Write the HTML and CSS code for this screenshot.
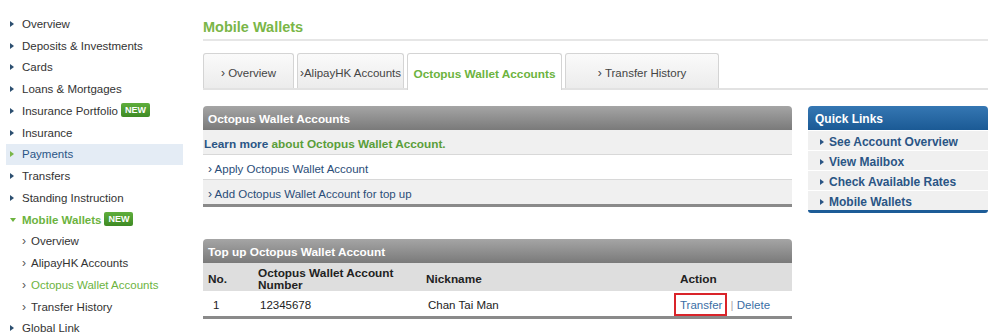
FILE: index.html
```html
<!DOCTYPE html>
<html lang="en">
<head>
    <meta charset="UTF-8">
    <title>Mobile Wallets</title>
    <link rel="stylesheet" href="styles.css">
</head>
<body>
    <div class="page">
        <ul class="sidebar">
            <li class="nav"><span class="tri"></span>Overview</li>
            <li class="nav"><span class="tri"></span>Deposits &amp; Investments</li>
            <li class="nav"><span class="tri"></span>Cards</li>
            <li class="nav"><span class="tri"></span>Loans &amp; Mortgages</li>
            <li class="nav"><span class="tri"></span>Insurance Portfolio <span class="badge">NEW</span></li>
            <li class="nav"><span class="tri"></span>Insurance</li>
            <li class="nav hover"><span class="tri"></span>Payments</li>
            <li class="nav"><span class="tri"></span>Transfers</li>
            <li class="nav"><span class="tri"></span>Standing Instruction</li>
            <li class="nav open"><span class="tri down"></span>Mobile Wallets <span class="badge">NEW</span></li>
            <li class="sub"><span class="chev">›</span>Overview</li>
            <li class="sub"><span class="chev">›</span>AlipayHK Accounts</li>
            <li class="sub current"><span class="chev">›</span>Octopus Wallet Accounts</li>
            <li class="sub"><span class="chev">›</span>Transfer History</li>
            <li class="nav"><span class="tri"></span>Global Link</li>
        </ul>

        <div class="main">
            <h1 class="title">Mobile Wallets</h1>

            <div class="tabs">
                <div class="tab t1"><span class="chev">›</span>&nbsp;Overview</div>
                <div class="tab t2"><span class="chev">›</span>AlipayHK Accounts</div>
                <div class="tab t3 active">Octopus Wallet Accounts</div>
                <div class="tab t4"><span class="chev">›</span>&nbsp;Transfer History</div>
            </div>

            <div class="content">
                <div class="left-col">
                    <div class="panel">
                        <div class="panel-head">Octopus Wallet Accounts</div>
                        <div class="row grey learn"><span class="blue">Learn more</span> <span class="green">about Octopus Wallet Account.</span></div>
                        <div class="row link"><span class="chev">›</span> Apply Octopus Wallet Account</div>
                        <div class="row grey link"><span class="chev">›</span> Add Octopus Wallet Account for top up</div>
                    </div>

                    <div class="panel second">
                        <div class="panel-head">Top up Octopus Wallet Account</div>
                        <table class="table">
                            <thead>
                                <tr>
                                    <th class="c-no">No.</th>
                                    <th class="c-acc">Octopus Wallet Account<br>Number</th>
                                    <th class="c-nick">Nickname</th>
                                    <th class="c-act">Action</th>
                                </tr>
                            </thead>
                            <tbody>
                                <tr>
                                    <td class="c-no">1</td>
                                    <td class="c-acc">12345678</td>
                                    <td class="c-nick">Chan Tai Man</td>
                                    <td class="c-act"><span class="act-link boxed">Transfer</span> <span class="sep">|</span> <span class="act-link">Delete</span></td>
                                </tr>
                            </tbody>
                        </table>
                    </div>
                </div>

                <div class="quick">
                    <div class="quick-head">Quick Links</div>
                    <div class="quick-item"><span class="tri"></span>See Account Overview</div>
                    <div class="quick-item"><span class="tri"></span>View Mailbox</div>
                    <div class="quick-item"><span class="tri"></span>Check Available Rates</div>
                    <div class="quick-item"><span class="tri"></span>Mobile Wallets</div>
                </div>
            </div>
        </div>
    </div>
</body>
</html>
```

FILE: styles.css
```css
body {
    margin: 0;
    background-color: #fff;
    font-family: "Liberation Sans", Arial, sans-serif;
    font-size: 11.5px;
    color: #333;
}

.page {
    display: flex;
    align-items: flex-start;
}

/* Left navigation */
.sidebar {
    list-style: none;
    margin: 0;
    padding: 13px 0 0 6px;
    width: 177px;
    flex-shrink: 0;
}

.sidebar li {
    height: 21.75px;
    display: flex;
    align-items: center;
    white-space: nowrap;
}

.nav {
    padding-left: 4px;
    color: #333;
}

.nav.hover {
    background-color: #e4ecf5;
    color: #2a5585;
}

.nav.hover .tri {
    border-left-color: #7ab648;
}

.nav.open {
    color: #6cb33e;
    font-weight: bold;
}

.tri {
    display: inline-block;
    width: 0;
    height: 0;
    border-top: 3px solid transparent;
    border-bottom: 3px solid transparent;
    border-left: 4px solid #2c4f70;
    margin-right: 8px;
}

.tri.down {
    border-left: 3px solid transparent;
    border-right: 3px solid transparent;
    border-top: 4px solid #6cb33e;
    border-bottom: none;
    margin-right: 6px;
}

.badge {
    display: inline-block;
    margin-left: 3px;
    padding: 1px 4px;
    font-size: 9px;
    font-weight: bold;
    line-height: 12px;
    color: #fff;
    background: linear-gradient(#5fae3c, #3e8a24);
    border-radius: 2px;
    position: relative;
    top: -1px;
}

.sub {
    padding-left: 16px;
    color: #333;
}

.sub .chev {
    font-size: 12px;
    color: #555;
    margin-right: 5px;
}

.sub.current {
    color: #6cb33e;
}

/* Main area */
.main {
    margin-left: 20px;
    width: 785px;
}

.title {
    margin: 17px 0 0 0;
    font-size: 14.5px;
    font-weight: bold;
    color: #7ab648;
    height: 22px;
    line-height: 20px;
    border-bottom: 2px solid #e6e6e6;
}

.tabs {
    display: flex;
    gap: 3px;
    margin-top: 12px;
    border-bottom: 2px solid #e2e2e2;
    height: 35px;
}

.tab {
    height: 35px;
    box-sizing: border-box;
    border: 1px solid #d4d4d4;
    border-bottom: none;
    border-radius: 3px 3px 0 0;
    background: linear-gradient(#fafafa, #ececec);
    display: flex;
    align-items: center;
    justify-content: center;
    padding-top: 4px;
    color: #444;
    white-space: nowrap;
}

.tab .chev {
    font-size: 12px;
}

.t1 { width: 91px; }
.t2 { width: 107px; }
.t3 { width: 155px; }
.t4 { width: 154px; }

.tab.active {
    background: #fff;
    color: #6cb33e;
    font-weight: bold;
    height: 37px;
    font-size: 11.8px;
}

.content {
    display: flex;
    align-items: flex-start;
    gap: 16px;
    margin-top: 16px;
}

.left-col {
    width: 589px;
}

.panel {
    border-bottom: 3px solid #8a8a8a;
}

.panel.second {
    margin-top: 32px;
}

.panel-head {
    height: 24px;
    line-height: 26px;
    padding-left: 5px;
    background: linear-gradient(#a5a5a5, #7a7a7a);
    border-radius: 4px 4px 0 0;
    color: #fff;
    font-weight: bold;
    font-size: 11.8px;
}

.row {
    height: 24px;
    line-height: 28px;
    padding-left: 5px;
    border-bottom: 1px solid #d8d8d8;
    color: #2a4d78;
}

.row:last-child {
    border-bottom: none;
}

.row.grey {
    background-color: #f0f0f0;
}

.row .chev {
    font-size: 12px;
}

.learn {
    padding-left: 1px;
    font-weight: bold;
    font-size: 11.8px;
}

.blue {
    color: #2a5585;
}

.green {
    color: #5a9e3a;
}

.table {
    width: 100%;
    border-collapse: collapse;
}

.table th {
    background-color: #dedede;
    text-align: left;
    font-weight: bold;
    font-size: 11.8px;
    color: #222;
    height: 28px;
    line-height: 12px;
    padding: 3px 0 0 0;
    box-sizing: border-box;
}

.table td {
    height: 23px;
    padding: 2px 0 0 0;
    color: #222;
}

.table .c-no { width: 50px; padding-left: 5px; }
.table td.c-no { padding-left: 10px; width: 45px; }
.table .c-acc { width: 168px; }
.table td.c-acc { padding-left: 2px; width: 166px; }
.table .c-nick { width: 254px; }
.table td.c-nick { padding-left: 2px; width: 252px; }

.act-link {
    color: #3a6ea5;
}

.boxed {
    display: inline-block;
    border: 2px solid #d9242a;
    padding: 4px 3px 3px 4px;
    margin-left: -6px;
}

.sep {
    color: #aaa;
}

/* Quick links */
.quick {
    width: 180px;
    border-bottom: 3px solid #1d5c97;
    border-radius: 0 0 3px 3px;
}

.quick-head {
    height: 24px;
    line-height: 26px;
    padding-left: 7px;
    color: #fff;
    font-weight: bold;
    font-size: 12px;
    background: linear-gradient(#3577b3, #1b5a95);
    border-radius: 4px 4px 0 0;
}

.quick-item {
    height: 19px;
    padding-top: 2px;
    box-sizing: border-box;
    margin-top: 1px;
    padding-left: 12px;
    background-color: #f0f0f0;
    color: #2a5585;
    font-weight: bold;
    font-size: 12px;
    display: flex;
    align-items: center;
}

.quick-item .tri {
    border-left-color: #2a5585;
    margin-right: 5px;
}
```
